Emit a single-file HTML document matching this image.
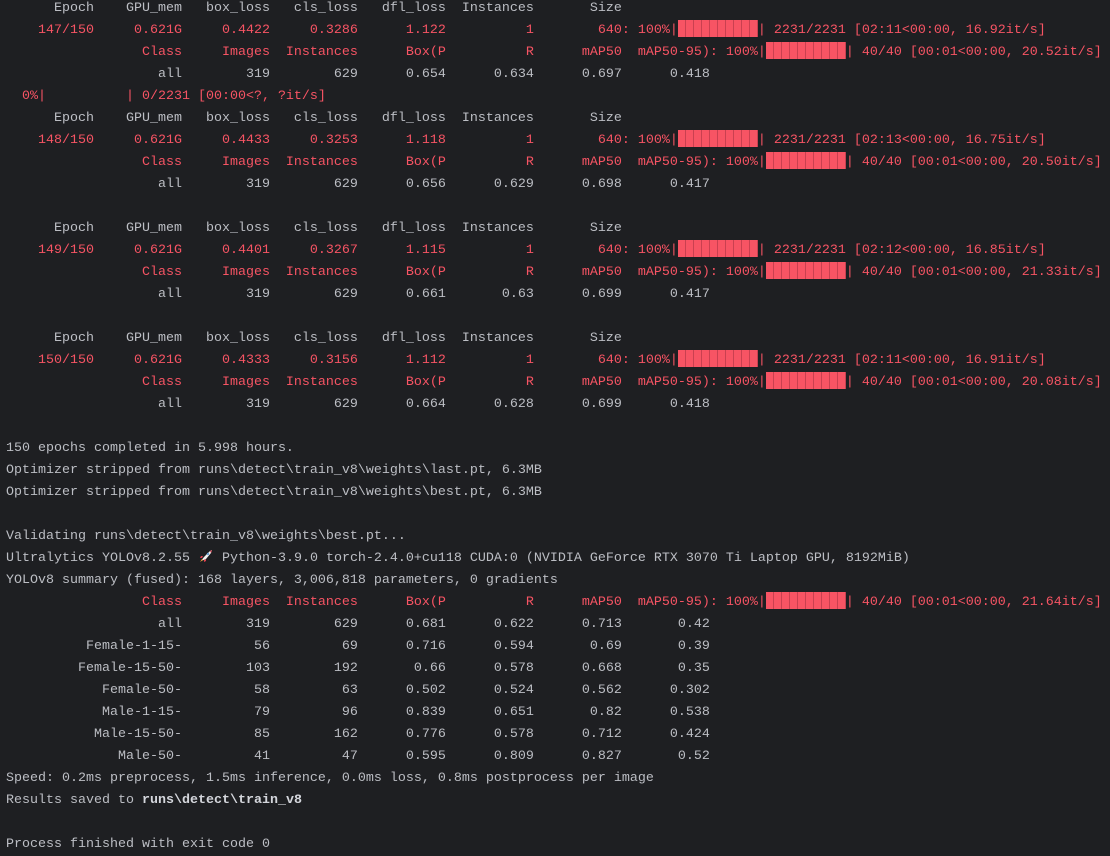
<!DOCTYPE html>
<html><head><meta charset="utf-8"><style>
html,body{margin:0;padding:0;background:#1e1f22;width:1110px;height:856px;overflow:hidden}
pre{margin:0;position:absolute;left:6px;top:-2px;font-family:"Liberation Mono","DejaVu Sans Mono",monospace;font-size:13.33px;line-height:22px;color:#bcbec4;white-space:pre}
.r{color:#f75464}
.b{display:inline-block;width:80px;height:17px;vertical-align:-4px;background:repeating-linear-gradient(90deg,#f75464 0 7px,#c94050 7px 8px)}
.k{display:inline-block;width:16px;height:14px;vertical-align:-2px}
b{font-weight:bold;color:#d4d6dc}
</style></head><body><pre>      Epoch    GPU_mem   box_loss   cls_loss   dfl_loss  Instances       Size
<span class="r">    147/150     0.621G     0.4422     0.3286      1.122          1        640: 100%|<span class="b"></span>| 2231/2231 [02:11&lt;00:00, 16.92it/s]</span>
<span class="r">                 Class     Images  Instances      Box(P          R      mAP50  mAP50-95): 100%|<span class="b"></span>| 40/40 [00:01&lt;00:00, 20.52it/s]</span>
                   all        319        629      0.654      0.634      0.697      0.418
<span class="r">  0%|          | 0/2231 [00:00&lt;?, ?it/s]</span>
      Epoch    GPU_mem   box_loss   cls_loss   dfl_loss  Instances       Size
<span class="r">    148/150     0.621G     0.4433     0.3253      1.118          1        640: 100%|<span class="b"></span>| 2231/2231 [02:13&lt;00:00, 16.75it/s]</span>
<span class="r">                 Class     Images  Instances      Box(P          R      mAP50  mAP50-95): 100%|<span class="b"></span>| 40/40 [00:01&lt;00:00, 20.50it/s]</span>
                   all        319        629      0.656      0.629      0.698      0.417

      Epoch    GPU_mem   box_loss   cls_loss   dfl_loss  Instances       Size
<span class="r">    149/150     0.621G     0.4401     0.3267      1.115          1        640: 100%|<span class="b"></span>| 2231/2231 [02:12&lt;00:00, 16.85it/s]</span>
<span class="r">                 Class     Images  Instances      Box(P          R      mAP50  mAP50-95): 100%|<span class="b"></span>| 40/40 [00:01&lt;00:00, 21.33it/s]</span>
                   all        319        629      0.661       0.63      0.699      0.417

      Epoch    GPU_mem   box_loss   cls_loss   dfl_loss  Instances       Size
<span class="r">    150/150     0.621G     0.4333     0.3156      1.112          1        640: 100%|<span class="b"></span>| 2231/2231 [02:11&lt;00:00, 16.91it/s]</span>
<span class="r">                 Class     Images  Instances      Box(P          R      mAP50  mAP50-95): 100%|<span class="b"></span>| 40/40 [00:01&lt;00:00, 20.08it/s]</span>
                   all        319        629      0.664      0.628      0.699      0.418

150 epochs completed in 5.998 hours.
Optimizer stripped from runs\detect\train_v8\weights\last.pt, 6.3MB
Optimizer stripped from runs\detect\train_v8\weights\best.pt, 6.3MB

Validating runs\detect\train_v8\weights\best.pt...
Ultralytics YOLOv8.2.55 <svg class="k" viewBox="0 0 16 14"><path d="M3 12 L6 8 L12 2 L14 1 L13 4 L8 10 Z" fill="#f2f2f2"/><path d="M12 2 L14 1 L13 4 Z" fill="#e04050"/><path d="M5 7 L3 7 L2 9 L4 9 Z M8 10 L8 12 L6 13 L6 11 Z" fill="#e04050"/><circle cx="10" cy="5" r="1.2" fill="#6aa0d0"/><path d="M2 13 L4 10 L5 11 Z" fill="#f0a030"/></svg> Python-3.9.0 torch-2.4.0+cu118 CUDA:0 (NVIDIA GeForce RTX 3070 Ti Laptop GPU, 8192MiB)
YOLOv8 summary (fused): 168 layers, 3,006,818 parameters, 0 gradients
<span class="r">                 Class     Images  Instances      Box(P          R      mAP50  mAP50-95): 100%|<span class="b"></span>| 40/40 [00:01&lt;00:00, 21.64it/s]</span>
                   all        319        629      0.681      0.622      0.713       0.42
          Female-1-15-         56         69      0.716      0.594       0.69       0.39
         Female-15-50-        103        192       0.66      0.578      0.668       0.35
            Female-50-         58         63      0.502      0.524      0.562      0.302
            Male-1-15-         79         96      0.839      0.651       0.82      0.538
           Male-15-50-         85        162      0.776      0.578      0.712      0.424
              Male-50-         41         47      0.595      0.809      0.827       0.52
Speed: 0.2ms preprocess, 1.5ms inference, 0.0ms loss, 0.8ms postprocess per image
Results saved to <b>runs\detect\train_v8</b>

Process finished with exit code 0
</pre></body></html>
